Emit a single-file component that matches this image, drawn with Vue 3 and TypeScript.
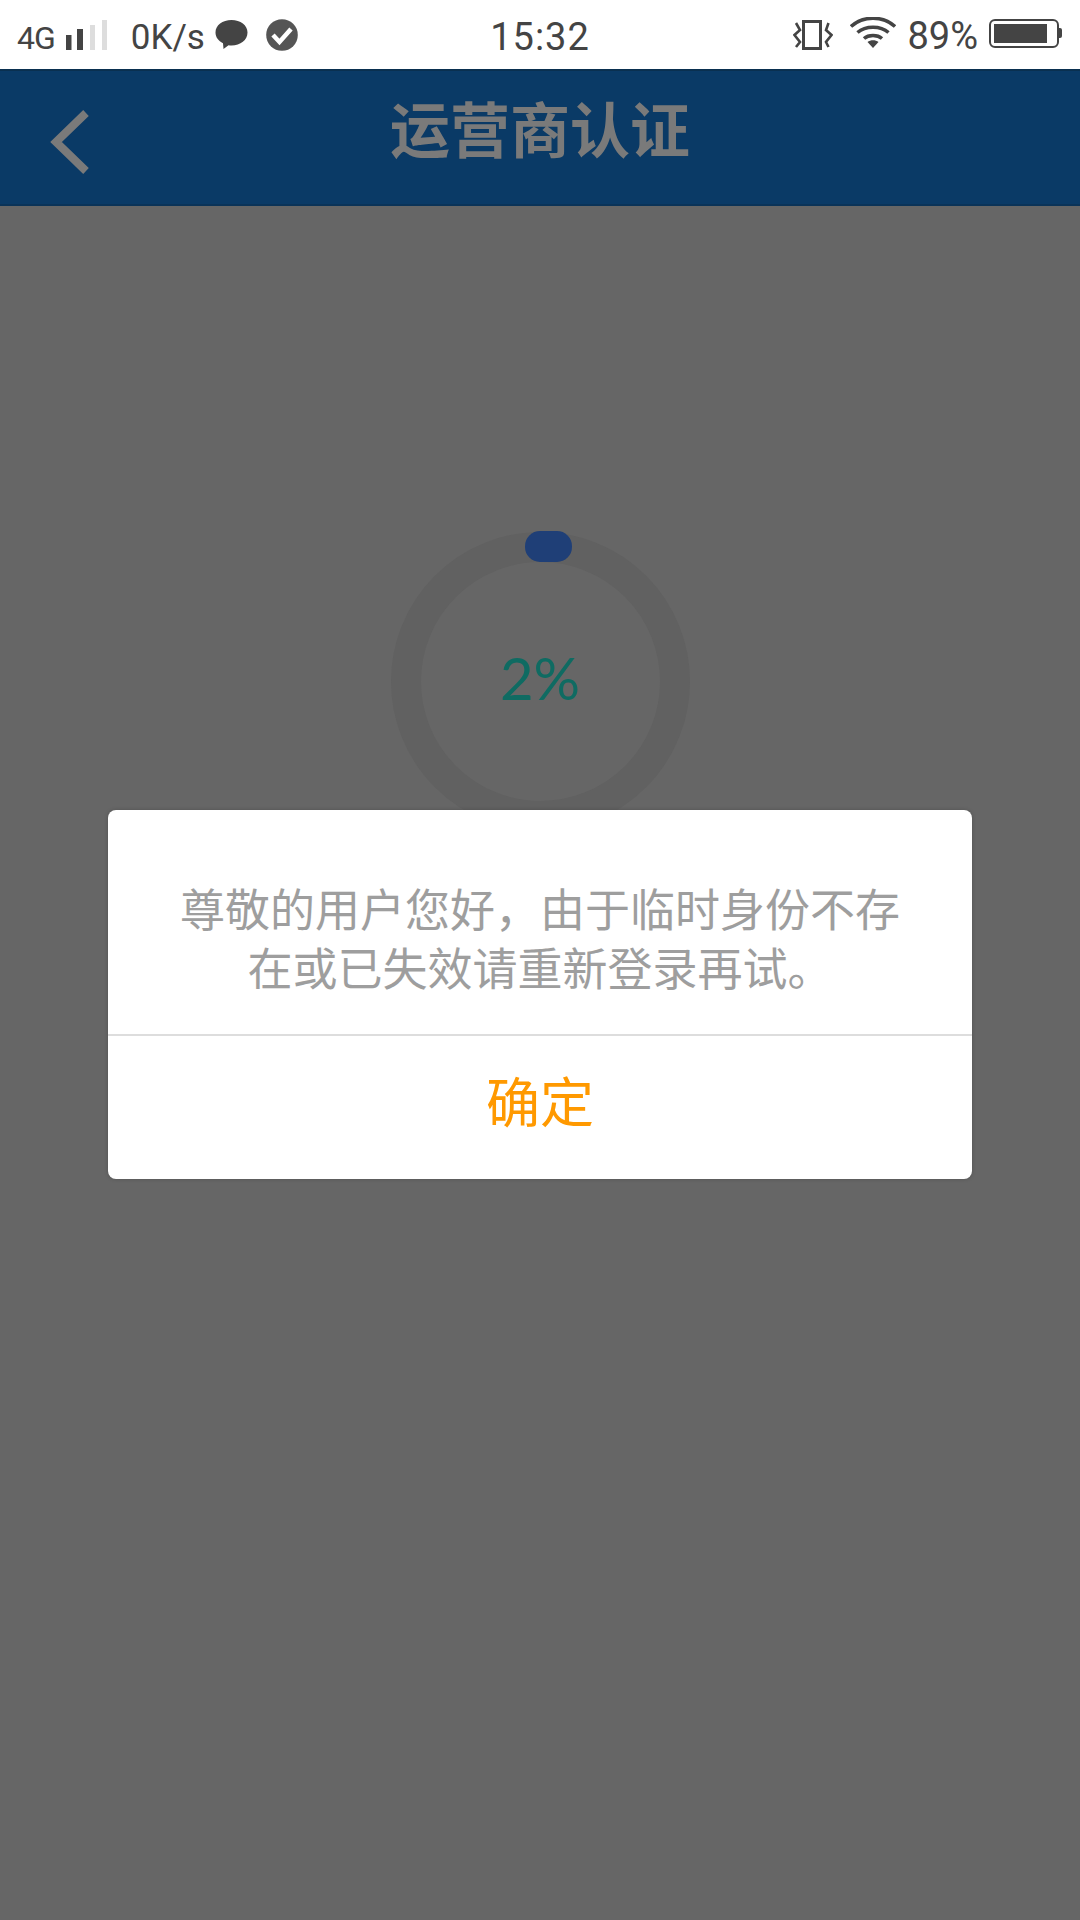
<template>
  <div class="page">
    <!-- 状态栏 -->
    <div class="status-bar">
      <div class="status-left">
        <span class="net">4G</span>
        <svg class="signal" width="42" height="32" viewBox="0 0 42 32">
          <rect x="1" y="16" width="5.500" height="15" fill="#444" />
          <rect x="12" y="10" width="6" height="21" fill="#444" />
          <rect x="25" y="6" width="5" height="25" fill="#ddd" />
          <rect x="37" y="1" width="5" height="30" fill="#ddd" />
        </svg>
        <span class="speed">0K/s</span>
        <svg class="chat" width="33" height="31" viewBox="0 0 33 31">
          <path d="M16.500 1C25.500 1 32.500 6 32.500 13.500C32.500 21 25.500 26.500 16.500 26.500C15.500 26.500 14.500 26.500 13.500 26.300L8.500 30L8 24.300C3.500 22 .5 18.200 .5 13.500C.5 6 7.500 1 16.500 1Z" fill="#444" />
        </svg>
        <svg class="check" width="32" height="32" viewBox="0 0 32 32">
          <circle cx="16" cy="16" r="15.800" fill="#555" />
          <path d="M7 16L13.500 23L25 10" fill="none" stroke="#fff" stroke-width="4.500" />
        </svg>
      </div>
      <div class="clock">15:32</div>
      <div class="status-right">
        <svg class="vibrate" width="40" height="32" viewBox="0 0 40 32">
          <rect x="10.500" y="2.500" width="17" height="27" fill="none" stroke="#444" stroke-width="3" />
          <path d="M3 4L7 11L1.500 16L7 23L3 28M35.500 4L33 11L38.500 16L33 23L35.500 28" fill="none" stroke="#444" stroke-width="2.600" />
        </svg>
        <svg class="wifi" width="46" height="32" viewBox="0 0 46 32">
          <path d="M1 9.500C13 -1.500 33 -1.500 45 9.500" fill="none" stroke="#444" stroke-width="3.500" />
          <path d="M7.500 15.500C15.500 8.500 30.500 8.500 38.500 15.500" fill="none" stroke="#444" stroke-width="3.500" />
          <path d="M14 21.500C18.500 17.500 27.500 17.500 32 21.500" fill="none" stroke="#444" stroke-width="3.500" />
          <path d="M17.500 25C20.500 22.500 25.500 22.500 28.500 25L23 31Z" fill="#444" />
        </svg>
        <span class="battery-text">89%</span>
        <div class="battery">
          <div class="battery-body">
            <div class="battery-fill" :style="{ width: battery + '%' }"></div>
          </div>
          <div class="battery-cap"></div>
        </div>
      </div>
    </div>

    <!-- 导航栏 -->
    <div class="nav-bar">
      <svg class="back" width="42" height="66" viewBox="0 0 42 66">
        <path d="M38 4L8 33L38 62" fill="none" stroke="#7a7a7a" stroke-width="8" />
      </svg>
      <div class="nav-title">运营商认证</div>
    </div>

    <!-- 进度环 -->
    <div class="content">
      <div class="ring">
        <div class="ring-knob"></div>
        <div class="ring-text">{{ progress }}%</div>
      </div>
    </div>

    <!-- 弹窗 -->
    <div class="dialog">
      <div class="dialog-message">{{ message }}</div>
      <div class="dialog-button">确定</div>
    </div>
  </div>
</template>

<script setup lang="ts">
const battery = 89
const progress = 2
const message = '尊敬的用户您好，由于临时身份不存在或已失效请重新登录再试。'
</script>

<style>
html,
body {
  margin: 0;
  background: #666;
}
</style>

<style scoped>
.page {
  position: relative;
  width: 1080px;
  height: 1920px;
  display: flex;
  flex-direction: column;
  overflow: hidden;
  background: #666;
  font-family: Roboto, "Noto Sans CJK SC", sans-serif;
}

.status-bar {
  flex: 0 0 69px;
  display: grid;
  grid-template-columns: 1fr auto 1fr;
  align-items: center;
  background: #fff;
  color: #444;
}

.status-left {
  display: flex;
  align-items: center;
  padding-left: 17px;
}

.net {
  font-size: 32px;
  letter-spacing: -1px;
  margin-top: 7px;
}

.signal {
  margin-left: 10px;
}

.speed {
  font-size: 35px;
  margin-left: 24px;
  margin-top: 6px;
}

.chat {
  margin-left: 10px;
}

.check {
  margin-left: 18px;
}

.clock {
  font-size: 38px;
  letter-spacing: 1px;
  margin-top: 5px;
}

.status-right {
  display: flex;
  align-items: center;
  justify-content: flex-end;
  padding-right: 18px;
}

.wifi {
  margin-left: 17px;
  margin-top: -3px;
}

.battery-text {
  font-size: 38px;
  margin-left: 11px;
  margin-top: 3px;
}

.battery {
  display: flex;
  align-items: center;
  margin-left: 11px;
  margin-top: -3px;
}

.battery-body {
  box-sizing: border-box;
  width: 70px;
  height: 29px;
  padding: 3px;
  border: 2px solid #444;
  border-radius: 6px;
}

.battery-fill {
  height: 100%;
  background: #444;
}

.battery-cap {
  width: 3px;
  height: 10px;
  background: #444;
  border-radius: 0 2px 2px 0;
}

.nav-bar {
  position: relative;
  flex: 0 0 137px;
  box-sizing: border-box;
  display: flex;
  align-items: center;
  justify-content: center;
  background: #0a3a66;
  border-top: 2px solid #0a3050;
  border-bottom: 2px solid #0a3358;
}

.back {
  position: absolute;
  left: 48px;
  top: 38px;
}

.nav-title {
  font-size: 60px;
  font-weight: 700;
  color: #7a7a7a;
  margin-top: -22px;
}

.content {
  flex: 1;
  display: flex;
  justify-content: center;
  padding-top: 326px;
}

.ring {
  position: relative;
  box-sizing: border-box;
  width: 299px;
  height: 299px;
  display: flex;
  align-items: center;
  justify-content: center;
  border: 30px solid #616161;
  border-radius: 50%;
}

.ring-knob {
  position: absolute;
  left: 104px;
  top: -31px;
  width: 47px;
  height: 31px;
  background: #1f3f77;
  border-radius: 15px;
}

.ring-text {
  font-family: Lato, sans-serif;
  font-size: 58px;
  font-weight: 400;
  color: #0f6b62;
  margin-top: -8px;
}

.dialog {
  position: absolute;
  left: 108px;
  top: 810px;
  width: 864px;
  height: 369px;
  display: flex;
  flex-direction: column;
  background: #fff;
  border-radius: 8px;
  box-shadow: 0 0 4px rgba(0, 0, 0, 0.2);
}

.dialog-message {
  flex: 0 0 226px;
  box-sizing: border-box;
  padding: 72px 65px 0;
  font-size: 45px;
  line-height: 59px;
  text-align: center;
  color: #9e9e9e;
  border-bottom: 2px solid #ddd;
}

.dialog-button {
  flex: 1;
  display: flex;
  align-items: center;
  justify-content: center;
  padding-bottom: 16px;
  font-size: 54px;
  color: #f90;
}
</style>
